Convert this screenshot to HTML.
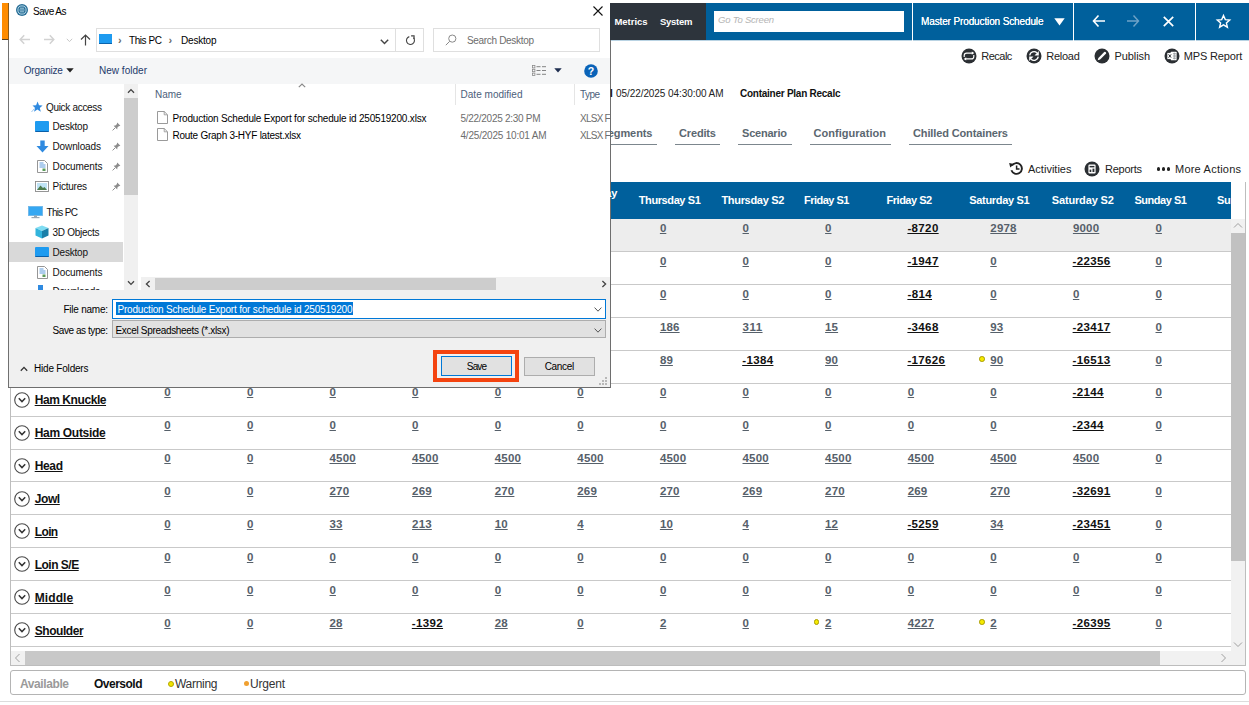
<!DOCTYPE html>
<html><head><meta charset="utf-8"><title>Save As</title>
<style>
html,body{margin:0;padding:0;}
body{width:1249px;height:705px;overflow:hidden;background:#fff;position:relative;font-family:"Liberation Sans", sans-serif;}
#app{position:absolute;left:0;top:0;width:1249px;height:705px;overflow:hidden;}
#dlg{position:absolute;left:9px;top:0px;width:601px;height:387px;overflow:hidden;background:#fff;}
u{text-decoration:underline;}
svg{position:absolute;overflow:visible;}
</style></head><body>
<div id="app">
<div style="position:absolute;left:2px;top:3px;width:6.5px;height:36.3px;background:#ff8c00;"></div>
<div style="position:absolute;left:2px;top:39.2px;width:7px;height:0.8px;background:#5a4020;"></div>
<div style="position:absolute;left:9px;top:3px;width:697px;height:37px;background:#2d343c;"></div>
<div style="position:absolute;left:706px;top:3px;width:543px;height:37px;background:#00609c;"></div>
<div style="position:absolute;left:9px;top:40px;width:1240px;height:1px;background:#b9d3e3;"></div>
<div style="position:absolute;left:714px;top:11px;width:190px;height:21px;background:#fff;"></div>
<div style="position:absolute;left:912px;top:3px;width:1px;height:38px;background:#fff;"></div>
<div style="position:absolute;left:1073px;top:3px;width:1px;height:38px;background:#fff;"></div>
<div style="position:absolute;left:1195px;top:3px;width:1px;height:38px;background:#fff;"></div>
<svg style="left:1054px;top:17.5px" width="11" height="8" viewBox="0 0 11 8"><path d="M0.3 0.3 L10.7 0.3 L5.5 7.6 Z" fill="#fff"/></svg>
<svg style="left:1092px;top:14px" width="14" height="14" viewBox="0 0 14 14"><path d="M13 7 H1.5 M6.5 1.5 L1.5 7 L6.5 12.5" fill="none" stroke="#fff" stroke-width="1.6"/></svg>
<svg style="left:1126px;top:14px" width="14" height="14" viewBox="0 0 14 14"><path d="M1 7 H12.5 M7.5 1.5 L12.5 7 L7.5 12.5" fill="none" stroke="#6fa3c7" stroke-width="1.4"/></svg>
<svg style="left:1163px;top:16px" width="11" height="11" viewBox="0 0 11 11"><path d="M0.8 0.8 L10.2 10.2 M10.2 0.8 L0.8 10.2" fill="none" stroke="#fff" stroke-width="1.7"/></svg>
<svg style="left:1216px;top:14px" width="15" height="15" viewBox="0 0 15 15"><path d="M7.5 1.5 L9.3 5.6 L13.7 6 L10.4 8.9 L11.4 13.2 L7.5 10.9 L3.6 13.2 L4.6 8.9 L1.3 6 L5.7 5.6 Z" fill="none" stroke="#fff" stroke-width="1.4" stroke-linejoin="miter"/></svg>
<svg style="left:960.9px;top:47.5px" width="16" height="16" viewBox="-8 -8 16 16"><circle r="7.5" fill="#2b2f33"/><path d="M-4.8 0.9 V-0.4 Q-4.8 -2.9 -2.3 -2.9 H3 M4.8 -0.9 V0.4 Q4.8 2.9 2.3 2.9 H-3" fill="none" stroke="#fff" stroke-width="1.15"/><path d="M2.8 -4.5 L5.3 -2.9 L2.8 -1.3 Z M-2.8 4.5 L-5.3 2.9 L-2.8 1.3 Z" fill="#fff"/></svg>
<svg style="left:1026.1px;top:47.5px" width="16" height="16" viewBox="-8 -8 16 16"><circle r="7.5" fill="#2b2f33"/><path d="M-4.3 -0.6 A4.35 4.35 0 0 1 2.9 -3.2 M4.3 0.6 A4.35 4.35 0 0 1 -2.9 3.2" fill="none" stroke="#fff" stroke-width="1.4"/><path d="M4.8 -4.9 V-0.6 H0.5 Z M-4.8 4.9 V0.6 H-0.5 Z" fill="#fff"/></svg>
<svg style="left:1093.8px;top:47.5px" width="16" height="16" viewBox="-8 -8 16 16"><circle r="7.5" fill="#2b2f33"/><path d="M-4.3 4.3 L-3.6 1.9 L2.2 -3.9 Q3 -4.6 3.8 -3.8 Q4.6 -3 3.9 -2.2 L-1.9 3.6 Z" fill="#fff"/></svg>
<svg style="left:1163.8px;top:47.5px" width="16" height="16" viewBox="-8 -8 16 16"><circle r="7.5" fill="#2b2f33"/><rect x="-1.2" y="-4.3" width="5.8" height="8.6" rx="0.6" fill="#fff"/><path d="M0.8 -2.4 H4 M0.8 -0.8 H4 M0.8 0.8 H4 M0.8 2.4 H4" stroke="#8a8f94" stroke-width="0.7"/><path d="M2.4 -3.4 V3.4" stroke="#8a8f94" stroke-width="0.6"/><rect x="-4.7" y="-3.1" width="5.2" height="6.2" fill="#fff"/><path d="M-3.4 -1.6 L-0.9 1.6 M-0.9 -1.6 L-3.4 1.6" stroke="#2b2f33" stroke-width="1"/></svg>
<div style="position:absolute;left:590px;top:144px;width:67px;height:1px;background:#7c868d;"></div>
<div style="position:absolute;left:675px;top:144px;width:45px;height:1px;background:#7c868d;"></div>
<div style="position:absolute;left:738px;top:144px;width:54px;height:1px;background:#7c868d;"></div>
<div style="position:absolute;left:810px;top:144px;width:80.5px;height:1px;background:#7c868d;"></div>
<div style="position:absolute;left:909px;top:144px;width:103px;height:1px;background:#7c868d;"></div>
<svg style="left:1007.5px;top:160px" width="17" height="17" viewBox="-8.5 -8.5 17 17"><path d="M-4.6 -2.9 A5.4 5.4 0 1 1 -5.1 1.8" fill="none" stroke="#222" stroke-width="1.9"/><path d="M-7.4 -5.6 L-2.4 -4.6 L-6.2 -0.9 Z" fill="#222"/><path d="M0.1 -3 V0.6 H3" fill="none" stroke="#222" stroke-width="1.5"/></svg>
<svg style="left:1084.3px;top:160.5px" width="16" height="16" viewBox="-8 -8 16 16"><circle r="7.5" fill="#2b2f33"/><rect x="-3.6" y="-4.4" width="7.2" height="8.8" rx="1.2" fill="#fff"/><rect x="-2.4" y="-3.1" width="4.8" height="1.5" fill="#2b2f33"/><rect x="-2.4" y="0.6" width="1.7" height="2.4" fill="#2b2f33"/><rect x="0.5" y="-0.4" width="1.9" height="3.4" fill="#2b2f33"/></svg>
<div style="position:absolute;left:1156.8px;top:167.2px;width:3.4px;height:3.4px;background:#222;border-radius:50%;"></div>
<div style="position:absolute;left:1161.8999999999999px;top:167.2px;width:3.4px;height:3.4px;background:#222;border-radius:50%;"></div>
<div style="position:absolute;left:1167.0px;top:167.2px;width:3.4px;height:3.4px;background:#222;border-radius:50%;"></div>
<div style="position:absolute;left:10px;top:182px;width:1236px;height:484px;border:1px solid #bdbdbd;box-sizing:border-box;"></div>
<div style="position:absolute;left:11px;top:182px;width:1220px;height:37px;background:#00609c;"></div>
<div style="position:absolute;left:1217.0px;top:190px;width:14.0px;height:22px;overflow:hidden;"><span style="position:absolute;left:0;top:-0.5px;line-height:20px;font-size:11px;font-weight:700;color:#fff;white-space:nowrap;letter-spacing:-0.3px">Sunday S2</span></div>
<div style="position:absolute;left:11px;top:219px;width:1220px;height:32px;background:#ededed;"></div>
<div style="position:absolute;left:11px;top:251.1px;width:1220px;height:1px;background:#c9c9c9;"></div>
<svg style="left:13px;top:226.3px" width="18" height="18" viewBox="-9 -9 18 18"><circle r="7.3" fill="#fff" stroke="#4a4a4a" stroke-width="1.1"/><path d="M-3.2 -1.7 L0 1.6 L3.2 -1.7" fill="none" stroke="#333" stroke-width="1.5"/></svg>
<div style="position:absolute;left:11px;top:284.0px;width:1220px;height:1px;background:#c9c9c9;"></div>
<svg style="left:13px;top:259.2px" width="18" height="18" viewBox="-9 -9 18 18"><circle r="7.3" fill="#fff" stroke="#4a4a4a" stroke-width="1.1"/><path d="M-3.2 -1.7 L0 1.6 L3.2 -1.7" fill="none" stroke="#333" stroke-width="1.5"/></svg>
<div style="position:absolute;left:11px;top:316.90000000000003px;width:1220px;height:1px;background:#c9c9c9;"></div>
<svg style="left:13px;top:292.1px" width="18" height="18" viewBox="-9 -9 18 18"><circle r="7.3" fill="#fff" stroke="#4a4a4a" stroke-width="1.1"/><path d="M-3.2 -1.7 L0 1.6 L3.2 -1.7" fill="none" stroke="#333" stroke-width="1.5"/></svg>
<div style="position:absolute;left:11px;top:349.8px;width:1220px;height:1px;background:#c9c9c9;"></div>
<svg style="left:13px;top:325.0px" width="18" height="18" viewBox="-9 -9 18 18"><circle r="7.3" fill="#fff" stroke="#4a4a4a" stroke-width="1.1"/><path d="M-3.2 -1.7 L0 1.6 L3.2 -1.7" fill="none" stroke="#333" stroke-width="1.5"/></svg>
<div style="position:absolute;left:11px;top:382.70000000000005px;width:1220px;height:1px;background:#c9c9c9;"></div>
<svg style="left:13px;top:357.90000000000003px" width="18" height="18" viewBox="-9 -9 18 18"><circle r="7.3" fill="#fff" stroke="#4a4a4a" stroke-width="1.1"/><path d="M-3.2 -1.7 L0 1.6 L3.2 -1.7" fill="none" stroke="#333" stroke-width="1.5"/></svg>
<div style="position:absolute;left:979.0px;top:356.20000000000005px;width:3.6px;height:3.6px;background:#f5ea00;border:1px solid #a89b00;border-radius:50%;"></div>
<div style="position:absolute;left:11px;top:415.6px;width:1220px;height:1px;background:#c9c9c9;"></div>
<svg style="left:13px;top:390.8px" width="18" height="18" viewBox="-9 -9 18 18"><circle r="7.3" fill="#fff" stroke="#4a4a4a" stroke-width="1.1"/><path d="M-3.2 -1.7 L0 1.6 L3.2 -1.7" fill="none" stroke="#333" stroke-width="1.5"/></svg>
<div style="position:absolute;left:11px;top:448.5px;width:1220px;height:1px;background:#c9c9c9;"></div>
<svg style="left:13px;top:423.7px" width="18" height="18" viewBox="-9 -9 18 18"><circle r="7.3" fill="#fff" stroke="#4a4a4a" stroke-width="1.1"/><path d="M-3.2 -1.7 L0 1.6 L3.2 -1.7" fill="none" stroke="#333" stroke-width="1.5"/></svg>
<div style="position:absolute;left:11px;top:481.4px;width:1220px;height:1px;background:#c9c9c9;"></div>
<svg style="left:13px;top:456.59999999999997px" width="18" height="18" viewBox="-9 -9 18 18"><circle r="7.3" fill="#fff" stroke="#4a4a4a" stroke-width="1.1"/><path d="M-3.2 -1.7 L0 1.6 L3.2 -1.7" fill="none" stroke="#333" stroke-width="1.5"/></svg>
<div style="position:absolute;left:11px;top:514.3px;width:1220px;height:1px;background:#c9c9c9;"></div>
<svg style="left:13px;top:489.5px" width="18" height="18" viewBox="-9 -9 18 18"><circle r="7.3" fill="#fff" stroke="#4a4a4a" stroke-width="1.1"/><path d="M-3.2 -1.7 L0 1.6 L3.2 -1.7" fill="none" stroke="#333" stroke-width="1.5"/></svg>
<div style="position:absolute;left:11px;top:547.1999999999999px;width:1220px;height:1px;background:#c9c9c9;"></div>
<svg style="left:13px;top:522.3999999999999px" width="18" height="18" viewBox="-9 -9 18 18"><circle r="7.3" fill="#fff" stroke="#4a4a4a" stroke-width="1.1"/><path d="M-3.2 -1.7 L0 1.6 L3.2 -1.7" fill="none" stroke="#333" stroke-width="1.5"/></svg>
<div style="position:absolute;left:11px;top:580.1px;width:1220px;height:1px;background:#c9c9c9;"></div>
<svg style="left:13px;top:555.3px" width="18" height="18" viewBox="-9 -9 18 18"><circle r="7.3" fill="#fff" stroke="#4a4a4a" stroke-width="1.1"/><path d="M-3.2 -1.7 L0 1.6 L3.2 -1.7" fill="none" stroke="#333" stroke-width="1.5"/></svg>
<div style="position:absolute;left:11px;top:613.0px;width:1220px;height:1px;background:#c9c9c9;"></div>
<svg style="left:13px;top:588.1999999999999px" width="18" height="18" viewBox="-9 -9 18 18"><circle r="7.3" fill="#fff" stroke="#4a4a4a" stroke-width="1.1"/><path d="M-3.2 -1.7 L0 1.6 L3.2 -1.7" fill="none" stroke="#333" stroke-width="1.5"/></svg>
<div style="position:absolute;left:11px;top:645.9px;width:1220px;height:1px;background:#c9c9c9;"></div>
<svg style="left:13px;top:621.0999999999999px" width="18" height="18" viewBox="-9 -9 18 18"><circle r="7.3" fill="#fff" stroke="#4a4a4a" stroke-width="1.1"/><path d="M-3.2 -1.7 L0 1.6 L3.2 -1.7" fill="none" stroke="#333" stroke-width="1.5"/></svg>
<div style="position:absolute;left:813.8px;top:619.4px;width:3.6px;height:3.6px;background:#f5ea00;border:1px solid #a89b00;border-radius:50%;"></div>
<div style="position:absolute;left:979.0px;top:619.4px;width:3.6px;height:3.6px;background:#f5ea00;border:1px solid #a89b00;border-radius:50%;"></div>
<div style="position:absolute;left:1231px;top:182px;width:14px;height:37px;background:#fff;"></div>
<div style="position:absolute;left:1231px;top:219px;width:14px;height:432px;background:#f1f1f1;"></div>
<div style="position:absolute;left:1231px;top:233px;width:14px;height:328px;background:#c1c1c1;"></div>
<svg style="left:1233px;top:222px" width="10" height="7" viewBox="0 0 10 7"><path d="M1 5.5 L5 1.5 L9 5.5" fill="none" stroke="#a0a0a0" stroke-width="1"/></svg>
<svg style="left:1233px;top:641px" width="10" height="7" viewBox="0 0 10 7"><path d="M1 1.5 L5 5.5 L9 1.5" fill="none" stroke="#a0a0a0" stroke-width="1"/></svg>
<div style="position:absolute;left:11px;top:651px;width:1234px;height:14px;background:#f1f1f1;"></div>
<div style="position:absolute;left:25px;top:651px;width:1135px;height:14px;background:#c8c8c8;"></div>
<svg style="left:14px;top:653px" width="7" height="10" viewBox="0 0 7 10"><path d="M5.5 1 L1.5 5 L5.5 9" fill="none" stroke="#a0a0a0" stroke-width="1"/></svg>
<svg style="left:1220px;top:653px" width="7" height="10" viewBox="0 0 7 10"><path d="M1.5 1 L5.5 5 L1.5 9" fill="none" stroke="#a0a0a0" stroke-width="1"/></svg>
<div style="position:absolute;left:10px;top:670.4px;width:1236px;height:24.6px;border:1px solid #b4b4b4;border-radius:3px;box-sizing:border-box;"></div>
<div style="position:absolute;left:168px;top:681px;width:4px;height:4px;background:#f2e600;border:1px solid #b5a800;border-radius:50%;"></div>
<div style="position:absolute;left:243.5px;top:681px;width:5px;height:5px;background:#f0a030;border-radius:50%;"></div>
<div style="position:absolute;left:0px;top:700.5px;width:1249px;height:1px;background:#dcdcdc;"></div>
<div style="position:absolute;left:8px;top:3px;width:1px;height:37px;background:#8a5a1c;"></div>
<div style="position:absolute;left:8px;top:40px;width:1px;height:348px;background:#707070;"></div>
<div style="position:absolute;left:610px;top:40px;width:1px;height:348px;background:#6e6e6e;"></div>
<div style="position:absolute;left:8px;top:387px;width:603px;height:1px;background:#6e6e6e;"></div>
<span id="t0" style="position:absolute;left:718px;top:9.5px;height:20px;line-height:20px;font-size:9.5px;font-weight:400;color:#b5b5b5;white-space:nowrap;letter-spacing:-0.207px;font-style:italic;">Go To Screen</span>
<span id="t1" style="position:absolute;left:614.5px;top:12.0px;height:20px;line-height:20px;font-size:9.5px;font-weight:700;color:#fff;white-space:nowrap;letter-spacing:-0.044px;">Metrics</span>
<span id="t2" style="position:absolute;left:660px;top:12.0px;height:20px;line-height:20px;font-size:9.5px;font-weight:700;color:#fff;white-space:nowrap;letter-spacing:-0.263px;">System</span>
<span id="t3" style="position:absolute;left:921px;top:11.5px;height:20px;line-height:20px;font-size:10px;font-weight:400;color:#fff;white-space:nowrap;letter-spacing:-0.125px;text-shadow:0 0 0.4px #fff;">Master Production Schedule</span>
<span id="t4" style="position:absolute;left:981.3px;top:45.9px;height:20px;line-height:20px;font-size:11px;font-weight:400;color:#222;white-space:nowrap;letter-spacing:-0.525px;">Recalc</span>
<span id="t5" style="position:absolute;left:1046.3px;top:45.9px;height:20px;line-height:20px;font-size:11px;font-weight:400;color:#222;white-space:nowrap;letter-spacing:-0.272px;">Reload</span>
<span id="t6" style="position:absolute;left:1114.5px;top:45.9px;height:20px;line-height:20px;font-size:11px;font-weight:400;color:#222;white-space:nowrap;letter-spacing:-0.096px;">Publish</span>
<span id="t7" style="position:absolute;left:1183.8px;top:45.9px;height:20px;line-height:20px;font-size:11px;font-weight:400;color:#222;white-space:nowrap;letter-spacing:-0.158px;">MPS Report</span>
<span id="t8" style="position:absolute;left:610px;top:84.0px;height:20px;line-height:20px;font-size:10px;font-weight:700;color:#111;white-space:nowrap;">l</span>
<span id="t9" style="position:absolute;left:616px;top:84.0px;height:20px;line-height:20px;font-size:10px;font-weight:400;color:#222;white-space:nowrap;letter-spacing:-0.071px;">05/22/2025 04:30:00 AM</span>
<span id="t10" style="position:absolute;left:740px;top:84.0px;height:20px;line-height:20px;font-size:10px;font-weight:700;color:#111;white-space:nowrap;letter-spacing:-0.255px;">Container Plan Recalc</span>
<span id="t11" style="position:absolute;left:600.5px;top:123.0px;height:20px;line-height:20px;font-size:11px;font-weight:700;color:#5b6770;white-space:nowrap;letter-spacing:-0.083px;">Segments</span>
<span id="t12" style="position:absolute;left:679px;top:123.0px;height:20px;line-height:20px;font-size:11px;font-weight:700;color:#5b6770;white-space:nowrap;letter-spacing:-0.151px;">Credits</span>
<span id="t13" style="position:absolute;left:742px;top:123.0px;height:20px;line-height:20px;font-size:11px;font-weight:700;color:#5b6770;white-space:nowrap;letter-spacing:-0.210px;">Scenario</span>
<span id="t14" style="position:absolute;left:813.5px;top:123.0px;height:20px;line-height:20px;font-size:11px;font-weight:700;color:#5b6770;white-space:nowrap;letter-spacing:0.033px;">Configuration</span>
<span id="t15" style="position:absolute;left:913px;top:123.0px;height:20px;line-height:20px;font-size:11px;font-weight:700;color:#5b6770;white-space:nowrap;letter-spacing:-0.129px;">Chilled Containers</span>
<span id="t16" style="position:absolute;left:1028px;top:158.7px;height:20px;line-height:20px;font-size:11px;font-weight:400;color:#222;white-space:nowrap;letter-spacing:0.010px;">Activities</span>
<span id="t17" style="position:absolute;left:1105px;top:158.7px;height:20px;line-height:20px;font-size:11px;font-weight:400;color:#222;white-space:nowrap;letter-spacing:-0.255px;">Reports</span>
<span id="t18" style="position:absolute;left:1175px;top:158.7px;height:20px;line-height:20px;font-size:11px;font-weight:400;color:#222;white-space:nowrap;letter-spacing:0.219px;">More Actions</span>
<span id="t19" style="position:absolute;left:143.20000000000002px;top:190.0px;height:20px;line-height:20px;font-size:11px;font-weight:700;color:#fff;white-space:nowrap;">Monday S1</span>
<span id="t20" style="position:absolute;left:225.8px;top:190.0px;height:20px;line-height:20px;font-size:11px;font-weight:700;color:#fff;white-space:nowrap;">Monday S2</span>
<span id="t21" style="position:absolute;left:308.4px;top:190.0px;height:20px;line-height:20px;font-size:11px;font-weight:700;color:#fff;white-space:nowrap;">Tuesday S1</span>
<span id="t22" style="position:absolute;left:391.0px;top:190.0px;height:20px;line-height:20px;font-size:11px;font-weight:700;color:#fff;white-space:nowrap;">Tuesday S2</span>
<span id="t23" style="position:absolute;left:473.59999999999997px;top:190.0px;height:20px;line-height:20px;font-size:11px;font-weight:700;color:#fff;white-space:nowrap;">Wednesday S1</span>
<span id="t24" style="position:absolute;left:558px;top:182.5px;height:20px;line-height:20px;font-size:11px;font-weight:700;color:#fff;white-space:nowrap;letter-spacing:-0.205px;">Wednesday</span>
<span id="t25" style="position:absolute;left:556.5px;top:198.5px;height:20px;line-height:20px;font-size:11px;font-weight:700;color:#fff;white-space:nowrap;">S2</span>
<span id="t26" style="position:absolute;left:638.8px;top:190.0px;height:20px;line-height:20px;font-size:11px;font-weight:700;color:#fff;white-space:nowrap;letter-spacing:-0.403px;">Thursday S1</span>
<span id="t27" style="position:absolute;left:721.4px;top:190.0px;height:20px;line-height:20px;font-size:11px;font-weight:700;color:#fff;white-space:nowrap;letter-spacing:-0.303px;">Thursday S2</span>
<span id="t28" style="position:absolute;left:803.9999999999999px;top:190.0px;height:20px;line-height:20px;font-size:11px;font-weight:700;color:#fff;white-space:nowrap;letter-spacing:-0.504px;">Friday S1</span>
<span id="t29" style="position:absolute;left:886.6px;top:190.0px;height:20px;line-height:20px;font-size:11px;font-weight:700;color:#fff;white-space:nowrap;letter-spacing:-0.504px;">Friday S2</span>
<span id="t30" style="position:absolute;left:969.1999999999999px;top:190.0px;height:20px;line-height:20px;font-size:11px;font-weight:700;color:#fff;white-space:nowrap;letter-spacing:-0.309px;">Saturday S1</span>
<span id="t31" style="position:absolute;left:1051.8px;top:190.0px;height:20px;line-height:20px;font-size:11px;font-weight:700;color:#fff;white-space:nowrap;letter-spacing:-0.159px;">Saturday S2</span>
<span id="t32" style="position:absolute;left:1134.4px;top:190.0px;height:20px;line-height:20px;font-size:11px;font-weight:700;color:#fff;white-space:nowrap;letter-spacing:-0.469px;">Sunday S1</span>
<span id="t33" style="position:absolute;left:34.7px;top:225.7px;height:20px;line-height:20px;font-size:12px;font-weight:700;color:#111;white-space:nowrap;"><u>Back Ribs</u></span>
<span id="t34" style="position:absolute;left:164.3px;top:217.9px;height:20px;line-height:20px;font-size:11.5px;font-weight:700;color:#56606a;white-space:nowrap;letter-spacing:0.000px;"><u>0</u></span>
<span id="t35" style="position:absolute;left:246.9px;top:217.9px;height:20px;line-height:20px;font-size:11.5px;font-weight:700;color:#56606a;white-space:nowrap;letter-spacing:0.000px;"><u>0</u></span>
<span id="t36" style="position:absolute;left:329.5px;top:217.9px;height:20px;line-height:20px;font-size:11.5px;font-weight:700;color:#56606a;white-space:nowrap;letter-spacing:0.000px;"><u>0</u></span>
<span id="t37" style="position:absolute;left:412.1px;top:217.9px;height:20px;line-height:20px;font-size:11.5px;font-weight:700;color:#56606a;white-space:nowrap;letter-spacing:0.000px;"><u>0</u></span>
<span id="t38" style="position:absolute;left:494.7px;top:217.9px;height:20px;line-height:20px;font-size:11.5px;font-weight:700;color:#56606a;white-space:nowrap;letter-spacing:0.000px;"><u>0</u></span>
<span id="t39" style="position:absolute;left:577.3px;top:217.9px;height:20px;line-height:20px;font-size:11.5px;font-weight:700;color:#56606a;white-space:nowrap;letter-spacing:0.000px;"><u>0</u></span>
<span id="t40" style="position:absolute;left:659.9px;top:217.9px;height:20px;line-height:20px;font-size:11.5px;font-weight:700;color:#56606a;white-space:nowrap;letter-spacing:0.000px;"><u>0</u></span>
<span id="t41" style="position:absolute;left:742.5px;top:217.9px;height:20px;line-height:20px;font-size:11.5px;font-weight:700;color:#56606a;white-space:nowrap;letter-spacing:0.000px;"><u>0</u></span>
<span id="t42" style="position:absolute;left:825.0999999999999px;top:217.9px;height:20px;line-height:20px;font-size:11.5px;font-weight:700;color:#56606a;white-space:nowrap;letter-spacing:0.000px;"><u>0</u></span>
<span id="t43" style="position:absolute;left:907.4000000000001px;top:217.9px;height:20px;line-height:20px;font-size:11.5px;font-weight:700;color:#111;white-space:nowrap;letter-spacing:0.370px;"><u>-8720</u></span>
<span id="t44" style="position:absolute;left:990.3px;top:217.9px;height:20px;line-height:20px;font-size:11.5px;font-weight:700;color:#56606a;white-space:nowrap;letter-spacing:0.202px;"><u>2978</u></span>
<span id="t45" style="position:absolute;left:1072.8999999999999px;top:217.9px;height:20px;line-height:20px;font-size:11.5px;font-weight:700;color:#56606a;white-space:nowrap;letter-spacing:0.202px;"><u>9000</u></span>
<span id="t46" style="position:absolute;left:1155.5px;top:217.9px;height:20px;line-height:20px;font-size:11.5px;font-weight:700;color:#56606a;white-space:nowrap;letter-spacing:0.000px;"><u>0</u></span>
<span id="t47" style="position:absolute;left:34.7px;top:258.6px;height:20px;line-height:20px;font-size:12px;font-weight:700;color:#111;white-space:nowrap;"><u>Belly</u></span>
<span id="t48" style="position:absolute;left:164.3px;top:250.8px;height:20px;line-height:20px;font-size:11.5px;font-weight:700;color:#56606a;white-space:nowrap;letter-spacing:0.000px;"><u>0</u></span>
<span id="t49" style="position:absolute;left:246.9px;top:250.8px;height:20px;line-height:20px;font-size:11.5px;font-weight:700;color:#56606a;white-space:nowrap;letter-spacing:0.000px;"><u>0</u></span>
<span id="t50" style="position:absolute;left:329.5px;top:250.8px;height:20px;line-height:20px;font-size:11.5px;font-weight:700;color:#56606a;white-space:nowrap;letter-spacing:0.000px;"><u>0</u></span>
<span id="t51" style="position:absolute;left:412.1px;top:250.8px;height:20px;line-height:20px;font-size:11.5px;font-weight:700;color:#56606a;white-space:nowrap;letter-spacing:0.000px;"><u>0</u></span>
<span id="t52" style="position:absolute;left:494.7px;top:250.8px;height:20px;line-height:20px;font-size:11.5px;font-weight:700;color:#56606a;white-space:nowrap;letter-spacing:0.000px;"><u>0</u></span>
<span id="t53" style="position:absolute;left:577.3px;top:250.8px;height:20px;line-height:20px;font-size:11.5px;font-weight:700;color:#56606a;white-space:nowrap;letter-spacing:0.000px;"><u>0</u></span>
<span id="t54" style="position:absolute;left:659.9px;top:250.8px;height:20px;line-height:20px;font-size:11.5px;font-weight:700;color:#56606a;white-space:nowrap;letter-spacing:0.000px;"><u>0</u></span>
<span id="t55" style="position:absolute;left:742.5px;top:250.8px;height:20px;line-height:20px;font-size:11.5px;font-weight:700;color:#56606a;white-space:nowrap;letter-spacing:0.000px;"><u>0</u></span>
<span id="t56" style="position:absolute;left:825.0999999999999px;top:250.8px;height:20px;line-height:20px;font-size:11.5px;font-weight:700;color:#56606a;white-space:nowrap;letter-spacing:0.000px;"><u>0</u></span>
<span id="t57" style="position:absolute;left:907.4000000000001px;top:250.8px;height:20px;line-height:20px;font-size:11.5px;font-weight:700;color:#111;white-space:nowrap;letter-spacing:0.370px;"><u>-1947</u></span>
<span id="t58" style="position:absolute;left:990.3px;top:250.8px;height:20px;line-height:20px;font-size:11.5px;font-weight:700;color:#56606a;white-space:nowrap;letter-spacing:0.000px;"><u>0</u></span>
<span id="t59" style="position:absolute;left:1072.6px;top:250.8px;height:20px;line-height:20px;font-size:11.5px;font-weight:700;color:#111;white-space:nowrap;letter-spacing:0.348px;"><u>-22356</u></span>
<span id="t60" style="position:absolute;left:1155.5px;top:250.8px;height:20px;line-height:20px;font-size:11.5px;font-weight:700;color:#56606a;white-space:nowrap;letter-spacing:0.000px;"><u>0</u></span>
<span id="t61" style="position:absolute;left:34.7px;top:291.5px;height:20px;line-height:20px;font-size:12px;font-weight:700;color:#111;white-space:nowrap;"><u>Butt</u></span>
<span id="t62" style="position:absolute;left:164.3px;top:283.7px;height:20px;line-height:20px;font-size:11.5px;font-weight:700;color:#56606a;white-space:nowrap;letter-spacing:0.000px;"><u>0</u></span>
<span id="t63" style="position:absolute;left:246.9px;top:283.7px;height:20px;line-height:20px;font-size:11.5px;font-weight:700;color:#56606a;white-space:nowrap;letter-spacing:0.000px;"><u>0</u></span>
<span id="t64" style="position:absolute;left:329.5px;top:283.7px;height:20px;line-height:20px;font-size:11.5px;font-weight:700;color:#56606a;white-space:nowrap;letter-spacing:0.000px;"><u>0</u></span>
<span id="t65" style="position:absolute;left:412.1px;top:283.7px;height:20px;line-height:20px;font-size:11.5px;font-weight:700;color:#56606a;white-space:nowrap;letter-spacing:0.000px;"><u>0</u></span>
<span id="t66" style="position:absolute;left:494.7px;top:283.7px;height:20px;line-height:20px;font-size:11.5px;font-weight:700;color:#56606a;white-space:nowrap;letter-spacing:0.000px;"><u>0</u></span>
<span id="t67" style="position:absolute;left:577.3px;top:283.7px;height:20px;line-height:20px;font-size:11.5px;font-weight:700;color:#56606a;white-space:nowrap;letter-spacing:0.000px;"><u>0</u></span>
<span id="t68" style="position:absolute;left:659.9px;top:283.7px;height:20px;line-height:20px;font-size:11.5px;font-weight:700;color:#56606a;white-space:nowrap;letter-spacing:0.000px;"><u>0</u></span>
<span id="t69" style="position:absolute;left:742.5px;top:283.7px;height:20px;line-height:20px;font-size:11.5px;font-weight:700;color:#56606a;white-space:nowrap;letter-spacing:0.000px;"><u>0</u></span>
<span id="t70" style="position:absolute;left:825.0999999999999px;top:283.7px;height:20px;line-height:20px;font-size:11.5px;font-weight:700;color:#56606a;white-space:nowrap;letter-spacing:0.000px;"><u>0</u></span>
<span id="t71" style="position:absolute;left:907.4000000000001px;top:283.7px;height:20px;line-height:20px;font-size:11.5px;font-weight:700;color:#111;white-space:nowrap;letter-spacing:0.406px;"><u>-814</u></span>
<span id="t72" style="position:absolute;left:990.3px;top:283.7px;height:20px;line-height:20px;font-size:11.5px;font-weight:700;color:#56606a;white-space:nowrap;letter-spacing:0.000px;"><u>0</u></span>
<span id="t73" style="position:absolute;left:1072.8999999999999px;top:283.7px;height:20px;line-height:20px;font-size:11.5px;font-weight:700;color:#56606a;white-space:nowrap;letter-spacing:0.000px;"><u>0</u></span>
<span id="t74" style="position:absolute;left:1155.5px;top:283.7px;height:20px;line-height:20px;font-size:11.5px;font-weight:700;color:#56606a;white-space:nowrap;letter-spacing:0.000px;"><u>0</u></span>
<span id="t75" style="position:absolute;left:34.7px;top:324.4px;height:20px;line-height:20px;font-size:12px;font-weight:700;color:#111;white-space:nowrap;"><u>Ham</u></span>
<span id="t76" style="position:absolute;left:164.3px;top:316.59999999999997px;height:20px;line-height:20px;font-size:11.5px;font-weight:700;color:#56606a;white-space:nowrap;letter-spacing:0.000px;"><u>0</u></span>
<span id="t77" style="position:absolute;left:246.9px;top:316.59999999999997px;height:20px;line-height:20px;font-size:11.5px;font-weight:700;color:#56606a;white-space:nowrap;letter-spacing:0.000px;"><u>0</u></span>
<span id="t78" style="position:absolute;left:329.5px;top:316.59999999999997px;height:20px;line-height:20px;font-size:11.5px;font-weight:700;color:#56606a;white-space:nowrap;letter-spacing:0.181px;"><u>186</u></span>
<span id="t79" style="position:absolute;left:412.1px;top:316.59999999999997px;height:20px;line-height:20px;font-size:11.5px;font-weight:700;color:#56606a;white-space:nowrap;letter-spacing:0.494px;"><u>311</u></span>
<span id="t80" style="position:absolute;left:494.7px;top:316.59999999999997px;height:20px;line-height:20px;font-size:11.5px;font-weight:700;color:#56606a;white-space:nowrap;letter-spacing:0.181px;"><u>186</u></span>
<span id="t81" style="position:absolute;left:577.3px;top:316.59999999999997px;height:20px;line-height:20px;font-size:11.5px;font-weight:700;color:#56606a;white-space:nowrap;letter-spacing:0.494px;"><u>311</u></span>
<span id="t82" style="position:absolute;left:659.9px;top:316.59999999999997px;height:20px;line-height:20px;font-size:11.5px;font-weight:700;color:#56606a;white-space:nowrap;letter-spacing:0.181px;"><u>186</u></span>
<span id="t83" style="position:absolute;left:742.5px;top:316.59999999999997px;height:20px;line-height:20px;font-size:11.5px;font-weight:700;color:#56606a;white-space:nowrap;letter-spacing:0.494px;"><u>311</u></span>
<span id="t84" style="position:absolute;left:825.0999999999999px;top:316.59999999999997px;height:20px;line-height:20px;font-size:11.5px;font-weight:700;color:#56606a;white-space:nowrap;letter-spacing:0.103px;"><u>15</u></span>
<span id="t85" style="position:absolute;left:907.4000000000001px;top:316.59999999999997px;height:20px;line-height:20px;font-size:11.5px;font-weight:700;color:#111;white-space:nowrap;letter-spacing:0.370px;"><u>-3468</u></span>
<span id="t86" style="position:absolute;left:990.3px;top:316.59999999999997px;height:20px;line-height:20px;font-size:11.5px;font-weight:700;color:#56606a;white-space:nowrap;letter-spacing:0.103px;"><u>93</u></span>
<span id="t87" style="position:absolute;left:1072.6px;top:316.59999999999997px;height:20px;line-height:20px;font-size:11.5px;font-weight:700;color:#111;white-space:nowrap;letter-spacing:0.348px;"><u>-23417</u></span>
<span id="t88" style="position:absolute;left:1155.5px;top:316.59999999999997px;height:20px;line-height:20px;font-size:11.5px;font-weight:700;color:#56606a;white-space:nowrap;letter-spacing:0.000px;"><u>0</u></span>
<span id="t89" style="position:absolute;left:34.7px;top:357.3px;height:20px;line-height:20px;font-size:12px;font-weight:700;color:#111;white-space:nowrap;"><u>Ham Inside</u></span>
<span id="t90" style="position:absolute;left:164.3px;top:349.5px;height:20px;line-height:20px;font-size:11.5px;font-weight:700;color:#56606a;white-space:nowrap;letter-spacing:0.000px;"><u>0</u></span>
<span id="t91" style="position:absolute;left:246.9px;top:349.5px;height:20px;line-height:20px;font-size:11.5px;font-weight:700;color:#56606a;white-space:nowrap;letter-spacing:0.000px;"><u>0</u></span>
<span id="t92" style="position:absolute;left:329.5px;top:349.5px;height:20px;line-height:20px;font-size:11.5px;font-weight:700;color:#56606a;white-space:nowrap;letter-spacing:0.103px;"><u>89</u></span>
<span id="t93" style="position:absolute;left:412.1px;top:349.5px;height:20px;line-height:20px;font-size:11.5px;font-weight:700;color:#56606a;white-space:nowrap;letter-spacing:0.103px;"><u>90</u></span>
<span id="t94" style="position:absolute;left:494.7px;top:349.5px;height:20px;line-height:20px;font-size:11.5px;font-weight:700;color:#56606a;white-space:nowrap;letter-spacing:0.103px;"><u>89</u></span>
<span id="t95" style="position:absolute;left:577.3px;top:349.5px;height:20px;line-height:20px;font-size:11.5px;font-weight:700;color:#56606a;white-space:nowrap;letter-spacing:0.103px;"><u>90</u></span>
<span id="t96" style="position:absolute;left:659.9px;top:349.5px;height:20px;line-height:20px;font-size:11.5px;font-weight:700;color:#56606a;white-space:nowrap;letter-spacing:0.103px;"><u>89</u></span>
<span id="t97" style="position:absolute;left:742.2px;top:349.5px;height:20px;line-height:20px;font-size:11.5px;font-weight:700;color:#111;white-space:nowrap;letter-spacing:0.370px;"><u>-1384</u></span>
<span id="t98" style="position:absolute;left:825.0999999999999px;top:349.5px;height:20px;line-height:20px;font-size:11.5px;font-weight:700;color:#56606a;white-space:nowrap;letter-spacing:0.103px;"><u>90</u></span>
<span id="t99" style="position:absolute;left:907.4000000000001px;top:349.5px;height:20px;line-height:20px;font-size:11.5px;font-weight:700;color:#111;white-space:nowrap;letter-spacing:0.348px;"><u>-17626</u></span>
<span id="t100" style="position:absolute;left:990.3px;top:349.5px;height:20px;line-height:20px;font-size:11.5px;font-weight:700;color:#56606a;white-space:nowrap;letter-spacing:0.103px;"><u>90</u></span>
<span id="t101" style="position:absolute;left:1072.6px;top:349.5px;height:20px;line-height:20px;font-size:11.5px;font-weight:700;color:#111;white-space:nowrap;letter-spacing:0.348px;"><u>-16513</u></span>
<span id="t102" style="position:absolute;left:1155.5px;top:349.5px;height:20px;line-height:20px;font-size:11.5px;font-weight:700;color:#56606a;white-space:nowrap;letter-spacing:0.000px;"><u>0</u></span>
<span id="t103" style="position:absolute;left:34.7px;top:390.2px;height:20px;line-height:20px;font-size:12px;font-weight:700;color:#111;white-space:nowrap;letter-spacing:-0.423px;"><u>Ham Knuckle</u></span>
<span id="t104" style="position:absolute;left:164.3px;top:382.4px;height:20px;line-height:20px;font-size:11.5px;font-weight:700;color:#56606a;white-space:nowrap;letter-spacing:0.000px;"><u>0</u></span>
<span id="t105" style="position:absolute;left:246.9px;top:382.4px;height:20px;line-height:20px;font-size:11.5px;font-weight:700;color:#56606a;white-space:nowrap;letter-spacing:0.000px;"><u>0</u></span>
<span id="t106" style="position:absolute;left:329.5px;top:382.4px;height:20px;line-height:20px;font-size:11.5px;font-weight:700;color:#56606a;white-space:nowrap;letter-spacing:0.000px;"><u>0</u></span>
<span id="t107" style="position:absolute;left:412.1px;top:382.4px;height:20px;line-height:20px;font-size:11.5px;font-weight:700;color:#56606a;white-space:nowrap;letter-spacing:0.000px;"><u>0</u></span>
<span id="t108" style="position:absolute;left:494.7px;top:382.4px;height:20px;line-height:20px;font-size:11.5px;font-weight:700;color:#56606a;white-space:nowrap;letter-spacing:0.000px;"><u>0</u></span>
<span id="t109" style="position:absolute;left:577.3px;top:382.4px;height:20px;line-height:20px;font-size:11.5px;font-weight:700;color:#56606a;white-space:nowrap;letter-spacing:0.000px;"><u>0</u></span>
<span id="t110" style="position:absolute;left:659.9px;top:382.4px;height:20px;line-height:20px;font-size:11.5px;font-weight:700;color:#56606a;white-space:nowrap;letter-spacing:0.000px;"><u>0</u></span>
<span id="t111" style="position:absolute;left:742.5px;top:382.4px;height:20px;line-height:20px;font-size:11.5px;font-weight:700;color:#56606a;white-space:nowrap;letter-spacing:0.000px;"><u>0</u></span>
<span id="t112" style="position:absolute;left:825.0999999999999px;top:382.4px;height:20px;line-height:20px;font-size:11.5px;font-weight:700;color:#56606a;white-space:nowrap;letter-spacing:0.000px;"><u>0</u></span>
<span id="t113" style="position:absolute;left:907.7px;top:382.4px;height:20px;line-height:20px;font-size:11.5px;font-weight:700;color:#56606a;white-space:nowrap;letter-spacing:0.000px;"><u>0</u></span>
<span id="t114" style="position:absolute;left:990.3px;top:382.4px;height:20px;line-height:20px;font-size:11.5px;font-weight:700;color:#56606a;white-space:nowrap;letter-spacing:0.000px;"><u>0</u></span>
<span id="t115" style="position:absolute;left:1072.6px;top:382.4px;height:20px;line-height:20px;font-size:11.5px;font-weight:700;color:#111;white-space:nowrap;letter-spacing:0.370px;"><u>-2144</u></span>
<span id="t116" style="position:absolute;left:1155.5px;top:382.4px;height:20px;line-height:20px;font-size:11.5px;font-weight:700;color:#56606a;white-space:nowrap;letter-spacing:0.000px;"><u>0</u></span>
<span id="t117" style="position:absolute;left:34.7px;top:423.09999999999997px;height:20px;line-height:20px;font-size:12px;font-weight:700;color:#111;white-space:nowrap;letter-spacing:-0.302px;"><u>Ham Outside</u></span>
<span id="t118" style="position:absolute;left:164.3px;top:415.29999999999995px;height:20px;line-height:20px;font-size:11.5px;font-weight:700;color:#56606a;white-space:nowrap;letter-spacing:0.000px;"><u>0</u></span>
<span id="t119" style="position:absolute;left:246.9px;top:415.29999999999995px;height:20px;line-height:20px;font-size:11.5px;font-weight:700;color:#56606a;white-space:nowrap;letter-spacing:0.000px;"><u>0</u></span>
<span id="t120" style="position:absolute;left:329.5px;top:415.29999999999995px;height:20px;line-height:20px;font-size:11.5px;font-weight:700;color:#56606a;white-space:nowrap;letter-spacing:0.000px;"><u>0</u></span>
<span id="t121" style="position:absolute;left:412.1px;top:415.29999999999995px;height:20px;line-height:20px;font-size:11.5px;font-weight:700;color:#56606a;white-space:nowrap;letter-spacing:0.000px;"><u>0</u></span>
<span id="t122" style="position:absolute;left:494.7px;top:415.29999999999995px;height:20px;line-height:20px;font-size:11.5px;font-weight:700;color:#56606a;white-space:nowrap;letter-spacing:0.000px;"><u>0</u></span>
<span id="t123" style="position:absolute;left:577.3px;top:415.29999999999995px;height:20px;line-height:20px;font-size:11.5px;font-weight:700;color:#56606a;white-space:nowrap;letter-spacing:0.000px;"><u>0</u></span>
<span id="t124" style="position:absolute;left:659.9px;top:415.29999999999995px;height:20px;line-height:20px;font-size:11.5px;font-weight:700;color:#56606a;white-space:nowrap;letter-spacing:0.000px;"><u>0</u></span>
<span id="t125" style="position:absolute;left:742.5px;top:415.29999999999995px;height:20px;line-height:20px;font-size:11.5px;font-weight:700;color:#56606a;white-space:nowrap;letter-spacing:0.000px;"><u>0</u></span>
<span id="t126" style="position:absolute;left:825.0999999999999px;top:415.29999999999995px;height:20px;line-height:20px;font-size:11.5px;font-weight:700;color:#56606a;white-space:nowrap;letter-spacing:0.000px;"><u>0</u></span>
<span id="t127" style="position:absolute;left:907.7px;top:415.29999999999995px;height:20px;line-height:20px;font-size:11.5px;font-weight:700;color:#56606a;white-space:nowrap;letter-spacing:0.000px;"><u>0</u></span>
<span id="t128" style="position:absolute;left:990.3px;top:415.29999999999995px;height:20px;line-height:20px;font-size:11.5px;font-weight:700;color:#56606a;white-space:nowrap;letter-spacing:0.000px;"><u>0</u></span>
<span id="t129" style="position:absolute;left:1072.6px;top:415.29999999999995px;height:20px;line-height:20px;font-size:11.5px;font-weight:700;color:#111;white-space:nowrap;letter-spacing:0.370px;"><u>-2344</u></span>
<span id="t130" style="position:absolute;left:1155.5px;top:415.29999999999995px;height:20px;line-height:20px;font-size:11.5px;font-weight:700;color:#56606a;white-space:nowrap;letter-spacing:0.000px;"><u>0</u></span>
<span id="t131" style="position:absolute;left:34.7px;top:455.99999999999994px;height:20px;line-height:20px;font-size:12px;font-weight:700;color:#111;white-space:nowrap;letter-spacing:-0.348px;"><u>Head</u></span>
<span id="t132" style="position:absolute;left:164.3px;top:448.19999999999993px;height:20px;line-height:20px;font-size:11.5px;font-weight:700;color:#56606a;white-space:nowrap;letter-spacing:0.000px;"><u>0</u></span>
<span id="t133" style="position:absolute;left:246.9px;top:448.19999999999993px;height:20px;line-height:20px;font-size:11.5px;font-weight:700;color:#56606a;white-space:nowrap;letter-spacing:0.000px;"><u>0</u></span>
<span id="t134" style="position:absolute;left:329.5px;top:448.19999999999993px;height:20px;line-height:20px;font-size:11.5px;font-weight:700;color:#56606a;white-space:nowrap;letter-spacing:0.202px;"><u>4500</u></span>
<span id="t135" style="position:absolute;left:412.1px;top:448.19999999999993px;height:20px;line-height:20px;font-size:11.5px;font-weight:700;color:#56606a;white-space:nowrap;letter-spacing:0.202px;"><u>4500</u></span>
<span id="t136" style="position:absolute;left:494.7px;top:448.19999999999993px;height:20px;line-height:20px;font-size:11.5px;font-weight:700;color:#56606a;white-space:nowrap;letter-spacing:0.202px;"><u>4500</u></span>
<span id="t137" style="position:absolute;left:577.3px;top:448.19999999999993px;height:20px;line-height:20px;font-size:11.5px;font-weight:700;color:#56606a;white-space:nowrap;letter-spacing:0.202px;"><u>4500</u></span>
<span id="t138" style="position:absolute;left:659.9px;top:448.19999999999993px;height:20px;line-height:20px;font-size:11.5px;font-weight:700;color:#56606a;white-space:nowrap;letter-spacing:0.202px;"><u>4500</u></span>
<span id="t139" style="position:absolute;left:742.5px;top:448.19999999999993px;height:20px;line-height:20px;font-size:11.5px;font-weight:700;color:#56606a;white-space:nowrap;letter-spacing:0.202px;"><u>4500</u></span>
<span id="t140" style="position:absolute;left:825.0999999999999px;top:448.19999999999993px;height:20px;line-height:20px;font-size:11.5px;font-weight:700;color:#56606a;white-space:nowrap;letter-spacing:0.202px;"><u>4500</u></span>
<span id="t141" style="position:absolute;left:907.7px;top:448.19999999999993px;height:20px;line-height:20px;font-size:11.5px;font-weight:700;color:#56606a;white-space:nowrap;letter-spacing:0.202px;"><u>4500</u></span>
<span id="t142" style="position:absolute;left:990.3px;top:448.19999999999993px;height:20px;line-height:20px;font-size:11.5px;font-weight:700;color:#56606a;white-space:nowrap;letter-spacing:0.202px;"><u>4500</u></span>
<span id="t143" style="position:absolute;left:1072.8999999999999px;top:448.19999999999993px;height:20px;line-height:20px;font-size:11.5px;font-weight:700;color:#56606a;white-space:nowrap;letter-spacing:0.202px;"><u>4500</u></span>
<span id="t144" style="position:absolute;left:1155.5px;top:448.19999999999993px;height:20px;line-height:20px;font-size:11.5px;font-weight:700;color:#56606a;white-space:nowrap;letter-spacing:0.000px;"><u>0</u></span>
<span id="t145" style="position:absolute;left:34.7px;top:488.9px;height:20px;line-height:20px;font-size:12px;font-weight:700;color:#111;white-space:nowrap;letter-spacing:-0.391px;"><u>Jowl</u></span>
<span id="t146" style="position:absolute;left:164.3px;top:481.09999999999997px;height:20px;line-height:20px;font-size:11.5px;font-weight:700;color:#56606a;white-space:nowrap;letter-spacing:0.000px;"><u>0</u></span>
<span id="t147" style="position:absolute;left:246.9px;top:481.09999999999997px;height:20px;line-height:20px;font-size:11.5px;font-weight:700;color:#56606a;white-space:nowrap;letter-spacing:0.000px;"><u>0</u></span>
<span id="t148" style="position:absolute;left:329.5px;top:481.09999999999997px;height:20px;line-height:20px;font-size:11.5px;font-weight:700;color:#56606a;white-space:nowrap;letter-spacing:0.181px;"><u>270</u></span>
<span id="t149" style="position:absolute;left:412.1px;top:481.09999999999997px;height:20px;line-height:20px;font-size:11.5px;font-weight:700;color:#56606a;white-space:nowrap;letter-spacing:0.181px;"><u>269</u></span>
<span id="t150" style="position:absolute;left:494.7px;top:481.09999999999997px;height:20px;line-height:20px;font-size:11.5px;font-weight:700;color:#56606a;white-space:nowrap;letter-spacing:0.181px;"><u>270</u></span>
<span id="t151" style="position:absolute;left:577.3px;top:481.09999999999997px;height:20px;line-height:20px;font-size:11.5px;font-weight:700;color:#56606a;white-space:nowrap;letter-spacing:0.181px;"><u>269</u></span>
<span id="t152" style="position:absolute;left:659.9px;top:481.09999999999997px;height:20px;line-height:20px;font-size:11.5px;font-weight:700;color:#56606a;white-space:nowrap;letter-spacing:0.181px;"><u>270</u></span>
<span id="t153" style="position:absolute;left:742.5px;top:481.09999999999997px;height:20px;line-height:20px;font-size:11.5px;font-weight:700;color:#56606a;white-space:nowrap;letter-spacing:0.181px;"><u>269</u></span>
<span id="t154" style="position:absolute;left:825.0999999999999px;top:481.09999999999997px;height:20px;line-height:20px;font-size:11.5px;font-weight:700;color:#56606a;white-space:nowrap;letter-spacing:0.181px;"><u>270</u></span>
<span id="t155" style="position:absolute;left:907.7px;top:481.09999999999997px;height:20px;line-height:20px;font-size:11.5px;font-weight:700;color:#56606a;white-space:nowrap;letter-spacing:0.181px;"><u>269</u></span>
<span id="t156" style="position:absolute;left:990.3px;top:481.09999999999997px;height:20px;line-height:20px;font-size:11.5px;font-weight:700;color:#56606a;white-space:nowrap;letter-spacing:0.181px;"><u>270</u></span>
<span id="t157" style="position:absolute;left:1072.6px;top:481.09999999999997px;height:20px;line-height:20px;font-size:11.5px;font-weight:700;color:#111;white-space:nowrap;letter-spacing:0.348px;"><u>-32691</u></span>
<span id="t158" style="position:absolute;left:1155.5px;top:481.09999999999997px;height:20px;line-height:20px;font-size:11.5px;font-weight:700;color:#56606a;white-space:nowrap;letter-spacing:0.000px;"><u>0</u></span>
<span id="t159" style="position:absolute;left:34.7px;top:521.8px;height:20px;line-height:20px;font-size:12px;font-weight:700;color:#111;white-space:nowrap;letter-spacing:-0.609px;"><u>Loin</u></span>
<span id="t160" style="position:absolute;left:164.3px;top:513.9999999999999px;height:20px;line-height:20px;font-size:11.5px;font-weight:700;color:#56606a;white-space:nowrap;letter-spacing:0.000px;"><u>0</u></span>
<span id="t161" style="position:absolute;left:246.9px;top:513.9999999999999px;height:20px;line-height:20px;font-size:11.5px;font-weight:700;color:#56606a;white-space:nowrap;letter-spacing:0.000px;"><u>0</u></span>
<span id="t162" style="position:absolute;left:329.5px;top:513.9999999999999px;height:20px;line-height:20px;font-size:11.5px;font-weight:700;color:#56606a;white-space:nowrap;letter-spacing:0.103px;"><u>33</u></span>
<span id="t163" style="position:absolute;left:412.1px;top:513.9999999999999px;height:20px;line-height:20px;font-size:11.5px;font-weight:700;color:#56606a;white-space:nowrap;letter-spacing:0.181px;"><u>213</u></span>
<span id="t164" style="position:absolute;left:494.7px;top:513.9999999999999px;height:20px;line-height:20px;font-size:11.5px;font-weight:700;color:#56606a;white-space:nowrap;letter-spacing:0.103px;"><u>10</u></span>
<span id="t165" style="position:absolute;left:577.3px;top:513.9999999999999px;height:20px;line-height:20px;font-size:11.5px;font-weight:700;color:#56606a;white-space:nowrap;letter-spacing:0.000px;"><u>4</u></span>
<span id="t166" style="position:absolute;left:659.9px;top:513.9999999999999px;height:20px;line-height:20px;font-size:11.5px;font-weight:700;color:#56606a;white-space:nowrap;letter-spacing:0.103px;"><u>10</u></span>
<span id="t167" style="position:absolute;left:742.5px;top:513.9999999999999px;height:20px;line-height:20px;font-size:11.5px;font-weight:700;color:#56606a;white-space:nowrap;letter-spacing:0.000px;"><u>4</u></span>
<span id="t168" style="position:absolute;left:825.0999999999999px;top:513.9999999999999px;height:20px;line-height:20px;font-size:11.5px;font-weight:700;color:#56606a;white-space:nowrap;letter-spacing:0.103px;"><u>12</u></span>
<span id="t169" style="position:absolute;left:907.4000000000001px;top:513.9999999999999px;height:20px;line-height:20px;font-size:11.5px;font-weight:700;color:#111;white-space:nowrap;letter-spacing:0.370px;"><u>-5259</u></span>
<span id="t170" style="position:absolute;left:990.3px;top:513.9999999999999px;height:20px;line-height:20px;font-size:11.5px;font-weight:700;color:#56606a;white-space:nowrap;letter-spacing:0.103px;"><u>34</u></span>
<span id="t171" style="position:absolute;left:1072.6px;top:513.9999999999999px;height:20px;line-height:20px;font-size:11.5px;font-weight:700;color:#111;white-space:nowrap;letter-spacing:0.348px;"><u>-23451</u></span>
<span id="t172" style="position:absolute;left:1155.5px;top:513.9999999999999px;height:20px;line-height:20px;font-size:11.5px;font-weight:700;color:#56606a;white-space:nowrap;letter-spacing:0.000px;"><u>0</u></span>
<span id="t173" style="position:absolute;left:34.7px;top:554.7px;height:20px;line-height:20px;font-size:12px;font-weight:700;color:#111;white-space:nowrap;letter-spacing:-0.500px;"><u>Loin S/E</u></span>
<span id="t174" style="position:absolute;left:164.3px;top:546.9px;height:20px;line-height:20px;font-size:11.5px;font-weight:700;color:#56606a;white-space:nowrap;letter-spacing:0.000px;"><u>0</u></span>
<span id="t175" style="position:absolute;left:246.9px;top:546.9px;height:20px;line-height:20px;font-size:11.5px;font-weight:700;color:#56606a;white-space:nowrap;letter-spacing:0.000px;"><u>0</u></span>
<span id="t176" style="position:absolute;left:329.5px;top:546.9px;height:20px;line-height:20px;font-size:11.5px;font-weight:700;color:#56606a;white-space:nowrap;letter-spacing:0.000px;"><u>0</u></span>
<span id="t177" style="position:absolute;left:412.1px;top:546.9px;height:20px;line-height:20px;font-size:11.5px;font-weight:700;color:#56606a;white-space:nowrap;letter-spacing:0.000px;"><u>0</u></span>
<span id="t178" style="position:absolute;left:494.7px;top:546.9px;height:20px;line-height:20px;font-size:11.5px;font-weight:700;color:#56606a;white-space:nowrap;letter-spacing:0.000px;"><u>0</u></span>
<span id="t179" style="position:absolute;left:577.3px;top:546.9px;height:20px;line-height:20px;font-size:11.5px;font-weight:700;color:#56606a;white-space:nowrap;letter-spacing:0.000px;"><u>0</u></span>
<span id="t180" style="position:absolute;left:659.9px;top:546.9px;height:20px;line-height:20px;font-size:11.5px;font-weight:700;color:#56606a;white-space:nowrap;letter-spacing:0.000px;"><u>0</u></span>
<span id="t181" style="position:absolute;left:742.5px;top:546.9px;height:20px;line-height:20px;font-size:11.5px;font-weight:700;color:#56606a;white-space:nowrap;letter-spacing:0.000px;"><u>0</u></span>
<span id="t182" style="position:absolute;left:825.0999999999999px;top:546.9px;height:20px;line-height:20px;font-size:11.5px;font-weight:700;color:#56606a;white-space:nowrap;letter-spacing:0.000px;"><u>0</u></span>
<span id="t183" style="position:absolute;left:907.7px;top:546.9px;height:20px;line-height:20px;font-size:11.5px;font-weight:700;color:#56606a;white-space:nowrap;letter-spacing:0.000px;"><u>0</u></span>
<span id="t184" style="position:absolute;left:990.3px;top:546.9px;height:20px;line-height:20px;font-size:11.5px;font-weight:700;color:#56606a;white-space:nowrap;letter-spacing:0.000px;"><u>0</u></span>
<span id="t185" style="position:absolute;left:1072.8999999999999px;top:546.9px;height:20px;line-height:20px;font-size:11.5px;font-weight:700;color:#56606a;white-space:nowrap;letter-spacing:0.000px;"><u>0</u></span>
<span id="t186" style="position:absolute;left:1155.5px;top:546.9px;height:20px;line-height:20px;font-size:11.5px;font-weight:700;color:#56606a;white-space:nowrap;letter-spacing:0.000px;"><u>0</u></span>
<span id="t187" style="position:absolute;left:34.7px;top:587.6px;height:20px;line-height:20px;font-size:12px;font-weight:700;color:#111;white-space:nowrap;letter-spacing:0.100px;"><u>Middle</u></span>
<span id="t188" style="position:absolute;left:164.3px;top:579.8px;height:20px;line-height:20px;font-size:11.5px;font-weight:700;color:#56606a;white-space:nowrap;letter-spacing:0.000px;"><u>0</u></span>
<span id="t189" style="position:absolute;left:246.9px;top:579.8px;height:20px;line-height:20px;font-size:11.5px;font-weight:700;color:#56606a;white-space:nowrap;letter-spacing:0.000px;"><u>0</u></span>
<span id="t190" style="position:absolute;left:329.5px;top:579.8px;height:20px;line-height:20px;font-size:11.5px;font-weight:700;color:#56606a;white-space:nowrap;letter-spacing:0.000px;"><u>0</u></span>
<span id="t191" style="position:absolute;left:412.1px;top:579.8px;height:20px;line-height:20px;font-size:11.5px;font-weight:700;color:#56606a;white-space:nowrap;letter-spacing:0.000px;"><u>0</u></span>
<span id="t192" style="position:absolute;left:494.7px;top:579.8px;height:20px;line-height:20px;font-size:11.5px;font-weight:700;color:#56606a;white-space:nowrap;letter-spacing:0.000px;"><u>0</u></span>
<span id="t193" style="position:absolute;left:577.3px;top:579.8px;height:20px;line-height:20px;font-size:11.5px;font-weight:700;color:#56606a;white-space:nowrap;letter-spacing:0.000px;"><u>0</u></span>
<span id="t194" style="position:absolute;left:659.9px;top:579.8px;height:20px;line-height:20px;font-size:11.5px;font-weight:700;color:#56606a;white-space:nowrap;letter-spacing:0.000px;"><u>0</u></span>
<span id="t195" style="position:absolute;left:742.5px;top:579.8px;height:20px;line-height:20px;font-size:11.5px;font-weight:700;color:#56606a;white-space:nowrap;letter-spacing:0.000px;"><u>0</u></span>
<span id="t196" style="position:absolute;left:825.0999999999999px;top:579.8px;height:20px;line-height:20px;font-size:11.5px;font-weight:700;color:#56606a;white-space:nowrap;letter-spacing:0.000px;"><u>0</u></span>
<span id="t197" style="position:absolute;left:907.7px;top:579.8px;height:20px;line-height:20px;font-size:11.5px;font-weight:700;color:#56606a;white-space:nowrap;letter-spacing:0.000px;"><u>0</u></span>
<span id="t198" style="position:absolute;left:990.3px;top:579.8px;height:20px;line-height:20px;font-size:11.5px;font-weight:700;color:#56606a;white-space:nowrap;letter-spacing:0.000px;"><u>0</u></span>
<span id="t199" style="position:absolute;left:1072.8999999999999px;top:579.8px;height:20px;line-height:20px;font-size:11.5px;font-weight:700;color:#56606a;white-space:nowrap;letter-spacing:0.000px;"><u>0</u></span>
<span id="t200" style="position:absolute;left:1155.5px;top:579.8px;height:20px;line-height:20px;font-size:11.5px;font-weight:700;color:#56606a;white-space:nowrap;letter-spacing:0.000px;"><u>0</u></span>
<span id="t201" style="position:absolute;left:34.7px;top:620.5px;height:20px;line-height:20px;font-size:12px;font-weight:700;color:#111;white-space:nowrap;letter-spacing:-0.431px;"><u>Shoulder</u></span>
<span id="t202" style="position:absolute;left:164.3px;top:612.6999999999999px;height:20px;line-height:20px;font-size:11.5px;font-weight:700;color:#56606a;white-space:nowrap;letter-spacing:0.000px;"><u>0</u></span>
<span id="t203" style="position:absolute;left:246.9px;top:612.6999999999999px;height:20px;line-height:20px;font-size:11.5px;font-weight:700;color:#56606a;white-space:nowrap;letter-spacing:0.000px;"><u>0</u></span>
<span id="t204" style="position:absolute;left:329.5px;top:612.6999999999999px;height:20px;line-height:20px;font-size:11.5px;font-weight:700;color:#56606a;white-space:nowrap;letter-spacing:0.103px;"><u>28</u></span>
<span id="t205" style="position:absolute;left:411.8px;top:612.6999999999999px;height:20px;line-height:20px;font-size:11.5px;font-weight:700;color:#111;white-space:nowrap;letter-spacing:0.370px;"><u>-1392</u></span>
<span id="t206" style="position:absolute;left:494.7px;top:612.6999999999999px;height:20px;line-height:20px;font-size:11.5px;font-weight:700;color:#56606a;white-space:nowrap;letter-spacing:0.103px;"><u>28</u></span>
<span id="t207" style="position:absolute;left:577.3px;top:612.6999999999999px;height:20px;line-height:20px;font-size:11.5px;font-weight:700;color:#56606a;white-space:nowrap;letter-spacing:0.000px;"><u>0</u></span>
<span id="t208" style="position:absolute;left:659.9px;top:612.6999999999999px;height:20px;line-height:20px;font-size:11.5px;font-weight:700;color:#56606a;white-space:nowrap;letter-spacing:0.000px;"><u>2</u></span>
<span id="t209" style="position:absolute;left:742.5px;top:612.6999999999999px;height:20px;line-height:20px;font-size:11.5px;font-weight:700;color:#56606a;white-space:nowrap;letter-spacing:0.000px;"><u>0</u></span>
<span id="t210" style="position:absolute;left:825.0999999999999px;top:612.6999999999999px;height:20px;line-height:20px;font-size:11.5px;font-weight:700;color:#56606a;white-space:nowrap;letter-spacing:0.000px;"><u>2</u></span>
<span id="t211" style="position:absolute;left:907.7px;top:612.6999999999999px;height:20px;line-height:20px;font-size:11.5px;font-weight:700;color:#56606a;white-space:nowrap;letter-spacing:0.202px;"><u>4227</u></span>
<span id="t212" style="position:absolute;left:990.3px;top:612.6999999999999px;height:20px;line-height:20px;font-size:11.5px;font-weight:700;color:#56606a;white-space:nowrap;letter-spacing:0.000px;"><u>2</u></span>
<span id="t213" style="position:absolute;left:1072.6px;top:612.6999999999999px;height:20px;line-height:20px;font-size:11.5px;font-weight:700;color:#111;white-space:nowrap;letter-spacing:0.348px;"><u>-26395</u></span>
<span id="t214" style="position:absolute;left:1155.5px;top:612.6999999999999px;height:20px;line-height:20px;font-size:11.5px;font-weight:700;color:#56606a;white-space:nowrap;letter-spacing:0.000px;"><u>0</u></span>
<span id="t215" style="position:absolute;left:20px;top:673.5px;height:20px;line-height:20px;font-size:12px;font-weight:700;color:#9a9a9a;white-space:nowrap;letter-spacing:-0.406px;">Available</span>
<span id="t216" style="position:absolute;left:94px;top:673.5px;height:20px;line-height:20px;font-size:12px;font-weight:700;color:#111;white-space:nowrap;letter-spacing:-0.504px;">Oversold</span>
<span id="t217" style="position:absolute;left:175px;top:673.5px;height:20px;line-height:20px;font-size:12px;font-weight:400;color:#333;white-space:nowrap;letter-spacing:-0.292px;">Warning</span>
<span id="t218" style="position:absolute;left:250px;top:673.5px;height:20px;line-height:20px;font-size:12px;font-weight:400;color:#333;white-space:nowrap;letter-spacing:-0.206px;">Urgent</span>
</div>
<div id="dlg">
<svg style="left:7px;top:4.1px" width="12" height="12" viewBox="-6 -6 12 12"><circle r="6" fill="#2a6f97"/><circle r="4.1" fill="none" stroke="#bfe0ee" stroke-width="0.9"/><path d="M-2.6 0 H2.6 M-2 -1.8 H2 M-2 1.8 H2" stroke="#bfe0ee" stroke-width="0.8"/></svg>
<svg style="left:584px;top:6px" width="10" height="10" viewBox="0 0 10 10"><path d="M0.5 0.5 L9.5 9.5 M9.5 0.5 L0.5 9.5" stroke="#111" stroke-width="1.1"/></svg>
<svg style="left:10px;top:34.2px" width="12" height="11" viewBox="0 0 12 11"><path d="M11 5.5 H1.2 M5.2 1.2 L1.2 5.5 L5.2 9.8" fill="none" stroke="#d2d2d2" stroke-width="1.5"/></svg>
<svg style="left:34px;top:34.2px" width="12" height="11" viewBox="0 0 12 11"><path d="M1 5.5 H10.8 M6.8 1.2 L10.8 5.5 L6.8 9.8" fill="none" stroke="#d2d2d2" stroke-width="1.5"/></svg>
<svg style="left:57px;top:37.5px" width="7" height="5" viewBox="0 0 7 5"><path d="M0.8 0.8 L3.5 3.6 L6.2 0.8" fill="none" stroke="#c8c8c8" stroke-width="1"/></svg>
<svg style="left:71px;top:34px" width="11" height="12" viewBox="0 0 11 12"><path d="M5.5 11.5 V1.2 M1 5.5 L5.5 1 L10 5.5" fill="none" stroke="#444" stroke-width="1.2"/></svg>
<div style="position:absolute;left:87px;top:27.6px;width:300px;height:24.6px;border:1px solid #dfdfdf;box-sizing:border-box;background:#fff;"></div>
<div style="position:absolute;left:387px;top:27.6px;width:27.8px;height:24.6px;border:1px solid #dfdfdf;border-left:none;box-sizing:border-box;background:#fff;"></div>
<div style="position:absolute;left:90px;top:34px;width:13px;height:9.5px;background:#1e9bf0;border-bottom:1.5px solid #0a64ad;box-sizing:border-box;"></div>
<svg style="left:371px;top:38.5px" width="9" height="6" viewBox="0 0 9 6"><path d="M0.8 0.8 L4.5 4.6 L8.2 0.8" fill="none" stroke="#444" stroke-width="1.4"/></svg>
<svg style="left:395.5px;top:35.2px" width="11" height="11" viewBox="-5.5 -5.5 11 11"><path d="M-1.2 -3.9 A4 4 0 1 0 2.9 -2.8" fill="none" stroke="#444" stroke-width="1.1"/><path d="M0.6 -4.6 H3.6 V-1.6" fill="none" stroke="#444" stroke-width="1.1"/></svg>
<div style="position:absolute;left:424px;top:27.6px;width:167px;height:24.6px;border:1px solid #dfdfdf;box-sizing:border-box;background:#fff;"></div>
<svg style="left:436px;top:34.4px" width="12" height="12" viewBox="0 0 12 12"><circle cx="7.3" cy="4.6" r="3.6" fill="none" stroke="#8a8a8a" stroke-width="1"/><path d="M4.7 7.3 L0.8 11.2" stroke="#8a8a8a" stroke-width="1"/></svg>
<div style="position:absolute;left:0px;top:58px;width:601px;height:26px;background:#f5f6f7;"></div>
<svg style="left:57px;top:68px" width="8" height="5" viewBox="0 0 8 5"><path d="M0.3 0.3 H7.7 L4 4.6 Z" fill="#222"/></svg>
<svg style="left:523px;top:65px" width="15" height="11" viewBox="0 0 15 11"><g fill="none" stroke="#8a8a8a" stroke-width="0.8"><rect x="0.5" y="0.5" width="2.4" height="2.4"/><rect x="0.5" y="4.3" width="2.4" height="2.4"/><rect x="0.5" y="8.1" width="2.4" height="2.4"/></g><path d="M4.5 1.7 H8.5 M10 1.7 H14 M4.5 5.5 H8.5 M10 5.5 H14 M4.5 9.3 H8.5 M10 9.3 H14" stroke="#777" stroke-width="0.9"/></svg>
<svg style="left:544.5px;top:68px" width="8" height="5" viewBox="0 0 8 5"><path d="M0.3 0.3 H7.7 L4 4.6 Z" fill="#1e2e50"/></svg>
<svg style="left:575px;top:63.5px" width="14" height="14" viewBox="-7 -7 14 14"><circle r="6.8" fill="#0a63b8"/><text x="0" y="3.9" text-anchor="middle" font-family="Liberation Sans, sans-serif" font-size="10.5" font-weight="700" fill="#fff">?</text></svg>
<div style="position:absolute;left:115px;top:84px;width:13.5px;height:206px;background:#f0f0f0;"></div>
<div style="position:absolute;left:115px;top:98px;width:13.5px;height:97px;background:#cdcdcd;"></div>
<svg style="left:118px;top:88px" width="8" height="6" viewBox="0 0 8 6"><path d="M1 4.8 L4 1.6 L7 4.8" fill="none" stroke="#444" stroke-width="1.3"/></svg>
<svg style="left:118px;top:280px" width="8" height="6" viewBox="0 0 8 6"><path d="M1 1.2 L4 4.4 L7 1.2" fill="none" stroke="#444" stroke-width="1.3"/></svg>
<div style="position:absolute;left:0px;top:242px;width:114.4px;height:19.8px;background:#d9d9d9;"></div>
<svg style="left:21.5px;top:101px" width="12" height="12" viewBox="0 0 12 12"><path d="M6.6 0.6 L8 4.3 L11.6 4.5 L8.8 6.9 L9.8 10.8 L6.4 8.6 L3 10.8 L4.1 7 L1.5 4.5 L5.1 4.3 Z" fill="#2f8ae0"/><path d="M0.5 11 L3.5 7.5" stroke="#9cc8f0" stroke-width="1"/></svg>
<div style="position:absolute;left:26px;top:121.0px;width:13.5px;height:10.5px;background:#1e9bf0;border-bottom:1.5px solid #0a5fa8;box-sizing:border-box;border-radius:1px;"></div>
<svg style="left:103px;top:122.0px" width="9" height="9" viewBox="0 0 9 9"><path d="M5.2 0.6 L8.4 3.8 L6.8 4.2 L5.4 5.6 L5.2 7.4 L1.6 3.8 L3.4 3.6 L4.8 2.2 Z" fill="#8c8c8c"/><path d="M3.2 5.8 L0.6 8.4" stroke="#8c8c8c" stroke-width="1"/></svg>
<svg style="left:26.5px;top:139.5px" width="13" height="13" viewBox="0 0 13 13"><path d="M4.3 0.5 H8.7 V6 H12.5 L6.5 12.5 L0.5 6 H4.3 Z" fill="#2f8ae0"/></svg>
<svg style="left:103px;top:141.5px" width="9" height="9" viewBox="0 0 9 9"><path d="M5.2 0.6 L8.4 3.8 L6.8 4.2 L5.4 5.6 L5.2 7.4 L1.6 3.8 L3.4 3.6 L4.8 2.2 Z" fill="#8c8c8c"/><path d="M3.2 5.8 L0.6 8.4" stroke="#8c8c8c" stroke-width="1"/></svg>
<svg style="left:27.5px;top:159.5px" width="11" height="13" viewBox="0 0 11 13"><path d="M0.5 0.5 H7.5 L10.5 3.5 V12.5 H0.5 Z" fill="#fff" stroke="#8a8a8a" stroke-width="0.9"/><path d="M2.5 3 H6.5 M2.5 5 H8.5 M2.5 7 H8.5" stroke="#4a90d9" stroke-width="0.9"/><rect x="5.5" y="8.5" width="3" height="2.5" fill="#5b9b5b"/></svg>
<svg style="left:103px;top:161.5px" width="9" height="9" viewBox="0 0 9 9"><path d="M5.2 0.6 L8.4 3.8 L6.8 4.2 L5.4 5.6 L5.2 7.4 L1.6 3.8 L3.4 3.6 L4.8 2.2 Z" fill="#8c8c8c"/><path d="M3.2 5.8 L0.6 8.4" stroke="#8c8c8c" stroke-width="1"/></svg>
<svg style="left:26px;top:180.5px" width="14" height="11" viewBox="0 0 14 11"><rect x="0.5" y="0.5" width="13" height="10" fill="#fff" stroke="#8a8a8a" stroke-width="0.9"/><rect x="2" y="2" width="10" height="7" fill="#bfe3f5"/><path d="M2 9 L5.5 4.5 L8 7 L9.5 6 L12 9 Z" fill="#4d7c4d"/></svg>
<svg style="left:103px;top:181.5px" width="9" height="9" viewBox="0 0 9 9"><path d="M5.2 0.6 L8.4 3.8 L6.8 4.2 L5.4 5.6 L5.2 7.4 L1.6 3.8 L3.4 3.6 L4.8 2.2 Z" fill="#8c8c8c"/><path d="M3.2 5.8 L0.6 8.4" stroke="#8c8c8c" stroke-width="1"/></svg>
<svg style="left:19px;top:205.5px" width="15" height="13" viewBox="0 0 15 13"><rect x="0.5" y="0.5" width="14" height="9" fill="#35a7f2" stroke="#6fb7e8" stroke-width="0.9"/><rect x="6" y="9.5" width="3" height="1.6" fill="#9aa7b3"/><rect x="3.5" y="11" width="8" height="1.2" fill="#9aa7b3"/></svg>
<svg style="left:26px;top:225px" width="14" height="14" viewBox="0 0 14 14"><path d="M7 0.5 L13.5 3 L7 6 L0.5 3 Z" fill="#7fdcf2"/><path d="M0.5 3 L7 6 V13.5 L0.5 10.5 Z" fill="#32b4dc"/><path d="M13.5 3 L7 6 V13.5 L13.5 10.5 Z" fill="#1a7fa8"/></svg>
<div style="position:absolute;left:26px;top:246.5px;width:13.5px;height:10.5px;background:#1e9bf0;border-bottom:1.5px solid #0a5fa8;box-sizing:border-box;border-radius:1px;"></div>
<svg style="left:27.5px;top:265.5px" width="11" height="13" viewBox="0 0 11 13"><path d="M0.5 0.5 H7.5 L10.5 3.5 V12.5 H0.5 Z" fill="#fff" stroke="#8a8a8a" stroke-width="0.9"/><path d="M2.5 3 H6.5 M2.5 5 H8.5 M2.5 7 H8.5" stroke="#4a90d9" stroke-width="0.9"/><rect x="5.5" y="8.5" width="3" height="2.5" fill="#5b9b5b"/></svg>
<div style="position:absolute;left:29px;top:285px;width:5px;height:5px;background:#2f8ae0;"></div>
<div style="position:absolute;left:43px;top:284px;width:50px;height:6px;overflow:hidden;"><span style="position:absolute;left:0.5px;top:-2px;line-height:20px;font-size:10px;color:#111;white-space:nowrap;letter-spacing:-0.25px">Downloads</span></div>
<svg style="left:289px;top:82.8px" width="8" height="5" viewBox="0 0 8 5"><path d="M0.8 4.2 L4 1 L7.2 4.2" fill="none" stroke="#8a8a8a" stroke-width="1.2"/></svg>
<div style="position:absolute;left:446px;top:84px;width:1px;height:21px;background:#e5e5e5;"></div>
<div style="position:absolute;left:565px;top:84px;width:1px;height:21px;background:#e5e5e5;"></div>
<svg style="left:148px;top:110.8px" width="11" height="13" viewBox="0 0 11 13"><path d="M0.5 0.5 H7.2 L10.5 3.8 V12.5 H0.5 Z" fill="#fff" stroke="#8f8f8f" stroke-width="0.9"/><path d="M7.2 0.5 V3.8 H10.5" fill="none" stroke="#8f8f8f" stroke-width="0.8"/></svg>
<svg style="left:148px;top:128.3px" width="11" height="13" viewBox="0 0 11 13"><path d="M0.5 0.5 H7.2 L10.5 3.8 V12.5 H0.5 Z" fill="#fff" stroke="#8f8f8f" stroke-width="0.9"/><path d="M7.2 0.5 V3.8 H10.5" fill="none" stroke="#8f8f8f" stroke-width="0.8"/></svg>
<div style="position:absolute;left:132px;top:277px;width:469px;height:13px;background:#f0f0f0;"></div>
<div style="position:absolute;left:146px;top:277.5px;width:341px;height:12px;background:#cdcdcd;"></div>
<svg style="left:136px;top:280px" width="6" height="8" viewBox="0 0 6 8"><path d="M4.6 1 L1.4 4 L4.6 7" fill="none" stroke="#444" stroke-width="1.3"/></svg>
<svg style="left:591.5px;top:280px" width="6" height="8" viewBox="0 0 6 8"><path d="M1.4 1 L4.6 4 L1.4 7" fill="none" stroke="#444" stroke-width="1.3"/></svg>
<div style="position:absolute;left:0px;top:290px;width:601px;height:97px;background:#f0f0f0;"></div>
<div style="position:absolute;left:102.7px;top:299.2px;width:494px;height:19.4px;border:1px solid #0078d7;box-sizing:border-box;background:#fff;"></div>
<div style="position:absolute;left:106.5px;top:301.7px;width:237.2px;height:13.8px;background:#0078d7;"></div>
<svg style="left:585px;top:306.5px" width="8" height="5" viewBox="0 0 8 5"><path d="M0.6 0.6 L4 4.2 L7.4 0.6" fill="none" stroke="#555" stroke-width="1"/></svg>
<div style="position:absolute;left:102.7px;top:320.4px;width:494px;height:18px;border:1px solid #adadad;box-sizing:border-box;background:#e1e1e1;"></div>
<svg style="left:585px;top:327.5px" width="8" height="5" viewBox="0 0 8 5"><path d="M0.6 0.6 L4 4.2 L7.4 0.6" fill="none" stroke="#555" stroke-width="1"/></svg>
<svg style="left:10.5px;top:366px" width="8" height="6" viewBox="0 0 8 6"><path d="M0.8 4.8 L4 1.4 L7.2 4.8" fill="none" stroke="#333" stroke-width="1.3"/></svg>
<div style="position:absolute;left:424px;top:349.5px;width:86px;height:32px;border:4px solid #f4430f;box-sizing:border-box;"></div>
<div style="position:absolute;left:432.2px;top:356px;width:71.2px;height:20px;border:1.4px solid #0078d7;box-sizing:border-box;background:#e1e1e1;"></div>
<div style="position:absolute;left:515px;top:356.5px;width:71px;height:19.5px;border:1px solid #adadad;box-sizing:border-box;background:#e1e1e1;"></div>
<div style="position:absolute;left:596px;top:377px;width:1.5px;height:1.5px;background:#b8b8b8;"></div>
<div style="position:absolute;left:593px;top:380px;width:1.5px;height:1.5px;background:#b8b8b8;"></div>
<div style="position:absolute;left:596px;top:380px;width:1.5px;height:1.5px;background:#b8b8b8;"></div>
<div style="position:absolute;left:590px;top:383px;width:1.5px;height:1.5px;background:#b8b8b8;"></div>
<div style="position:absolute;left:593px;top:383px;width:1.5px;height:1.5px;background:#b8b8b8;"></div>
<div style="position:absolute;left:596px;top:383px;width:1.5px;height:1.5px;background:#b8b8b8;"></div>
<span id="t219" style="position:absolute;left:24px;top:1.6999999999999993px;height:20px;line-height:20px;font-size:10px;font-weight:400;color:#000;white-space:nowrap;letter-spacing:-0.534px;">Save As</span>
<span id="t220" style="position:absolute;left:109px;top:29.799999999999997px;height:20px;line-height:20px;font-size:11px;font-weight:700;color:#6a6a6a;white-space:nowrap;">›</span>
<span id="t221" style="position:absolute;left:120px;top:30.5px;height:20px;line-height:20px;font-size:10px;font-weight:400;color:#000;white-space:nowrap;letter-spacing:-0.427px;">This PC</span>
<span id="t222" style="position:absolute;left:159.5px;top:29.799999999999997px;height:20px;line-height:20px;font-size:11px;font-weight:700;color:#6a6a6a;white-space:nowrap;">›</span>
<span id="t223" style="position:absolute;left:172px;top:30.5px;height:20px;line-height:20px;font-size:10px;font-weight:400;color:#000;white-space:nowrap;letter-spacing:-0.198px;">Desktop</span>
<span id="t224" style="position:absolute;left:458px;top:30.6px;height:20px;line-height:20px;font-size:10px;font-weight:400;color:#6d6d6d;white-space:nowrap;letter-spacing:-0.320px;">Search Desktop</span>
<span id="t225" style="position:absolute;left:14.8px;top:61.0px;height:20px;line-height:20px;font-size:10px;font-weight:400;color:#1e3a6b;white-space:nowrap;letter-spacing:-0.225px;">Organize</span>
<span id="t226" style="position:absolute;left:90px;top:61.0px;height:20px;line-height:20px;font-size:10px;font-weight:400;color:#1e3a6b;white-space:nowrap;letter-spacing:0.021px;">New folder</span>
<span id="t227" style="position:absolute;left:37px;top:97.5px;height:20px;line-height:20px;font-size:10px;font-weight:400;color:#111;white-space:nowrap;letter-spacing:-0.315px;">Quick access</span>
<span id="t228" style="position:absolute;left:43.5px;top:117.0px;height:20px;line-height:20px;font-size:10px;font-weight:400;color:#111;white-space:nowrap;letter-spacing:-0.198px;">Desktop</span>
<span id="t229" style="position:absolute;left:43.5px;top:136.5px;height:20px;line-height:20px;font-size:10px;font-weight:400;color:#111;white-space:nowrap;letter-spacing:-0.123px;">Downloads</span>
<span id="t230" style="position:absolute;left:43.5px;top:156.5px;height:20px;line-height:20px;font-size:10px;font-weight:400;color:#111;white-space:nowrap;letter-spacing:-0.072px;">Documents</span>
<span id="t231" style="position:absolute;left:43.5px;top:176.5px;height:20px;line-height:20px;font-size:10px;font-weight:400;color:#111;white-space:nowrap;letter-spacing:-0.232px;">Pictures</span>
<span id="t232" style="position:absolute;left:37.5px;top:202.5px;height:20px;line-height:20px;font-size:10px;font-weight:400;color:#111;white-space:nowrap;letter-spacing:-0.677px;">This PC</span>
<span id="t233" style="position:absolute;left:43.5px;top:222.5px;height:20px;line-height:20px;font-size:10px;font-weight:400;color:#111;white-space:nowrap;letter-spacing:-0.274px;">3D Objects</span>
<span id="t234" style="position:absolute;left:43.5px;top:242.5px;height:20px;line-height:20px;font-size:10px;font-weight:400;color:#111;white-space:nowrap;letter-spacing:-0.198px;">Desktop</span>
<span id="t235" style="position:absolute;left:43.5px;top:262.5px;height:20px;line-height:20px;font-size:10px;font-weight:400;color:#111;white-space:nowrap;letter-spacing:-0.072px;">Documents</span>
<span id="t236" style="position:absolute;left:146px;top:84.5px;height:20px;line-height:20px;font-size:10px;font-weight:400;color:#4c607a;white-space:nowrap;letter-spacing:-0.062px;">Name</span>
<span id="t237" style="position:absolute;left:451.5px;top:84.5px;height:20px;line-height:20px;font-size:10px;font-weight:400;color:#4c607a;white-space:nowrap;letter-spacing:0.025px;">Date modified</span>
<span id="t238" style="position:absolute;left:571px;top:84.5px;height:20px;line-height:20px;font-size:10px;font-weight:400;color:#4c607a;white-space:nowrap;letter-spacing:-0.562px;">Type</span>
<span id="t239" style="position:absolute;left:163.5px;top:108.5px;height:20px;line-height:20px;font-size:10px;font-weight:400;color:#000;white-space:nowrap;letter-spacing:-0.190px;">Production Schedule Export for schedule id 250519200.xlsx</span>
<span id="t240" style="position:absolute;left:451.5px;top:108.5px;height:20px;line-height:20px;font-size:10px;font-weight:400;color:#6d6d6d;white-space:nowrap;letter-spacing:-0.282px;">5/22/2025 2:30 PM</span>
<span id="t241" style="position:absolute;left:571px;top:108.5px;height:20px;line-height:20px;font-size:10px;font-weight:400;color:#6d6d6d;white-space:nowrap;letter-spacing:-0.746px;">XLSX File</span>
<span id="t242" style="position:absolute;left:163.5px;top:126.0px;height:20px;line-height:20px;font-size:10px;font-weight:400;color:#000;white-space:nowrap;letter-spacing:-0.254px;">Route Graph 3-HYF latest.xlsx</span>
<span id="t243" style="position:absolute;left:451.5px;top:126.0px;height:20px;line-height:20px;font-size:10px;font-weight:400;color:#6d6d6d;white-space:nowrap;letter-spacing:-0.208px;">4/25/2025 10:01 AM</span>
<span id="t244" style="position:absolute;left:571px;top:126.0px;height:20px;line-height:20px;font-size:10px;font-weight:400;color:#6d6d6d;white-space:nowrap;letter-spacing:-0.746px;">XLSX File</span>
<span id="t245" style="position:absolute;left:54.5px;top:299.6px;height:20px;line-height:20px;font-size:10px;font-weight:400;color:#000;white-space:nowrap;letter-spacing:-0.243px;">File name:</span>
<span id="t246" style="position:absolute;left:43.5px;top:320.5px;height:20px;line-height:20px;font-size:10px;font-weight:400;color:#000;white-space:nowrap;letter-spacing:-0.424px;">Save as type:</span>
<span id="t247" style="position:absolute;left:108.5px;top:299.5px;height:20px;line-height:20px;font-size:10px;font-weight:400;color:#fff;white-space:nowrap;letter-spacing:-0.189px;">Production Schedule Export for schedule id 250519200</span>
<span id="t248" style="position:absolute;left:106.5px;top:320.5px;height:20px;line-height:20px;font-size:10px;font-weight:400;color:#000;white-space:nowrap;letter-spacing:-0.319px;">Excel Spreadsheets (*.xlsx)</span>
<span id="t249" style="position:absolute;left:25px;top:359.0px;height:20px;line-height:20px;font-size:10px;font-weight:400;color:#000;white-space:nowrap;letter-spacing:-0.200px;">Hide Folders</span>
<span id="t250" style="position:absolute;left:457.8px;top:356.8px;height:20px;line-height:20px;font-size:10px;font-weight:400;color:#000;white-space:nowrap;letter-spacing:-0.832px;">Save</span>
<span id="t251" style="position:absolute;left:535.7px;top:356.8px;height:20px;line-height:20px;font-size:10px;font-weight:400;color:#000;white-space:nowrap;letter-spacing:-0.308px;">Cancel</span>
</div>
</body></html>
